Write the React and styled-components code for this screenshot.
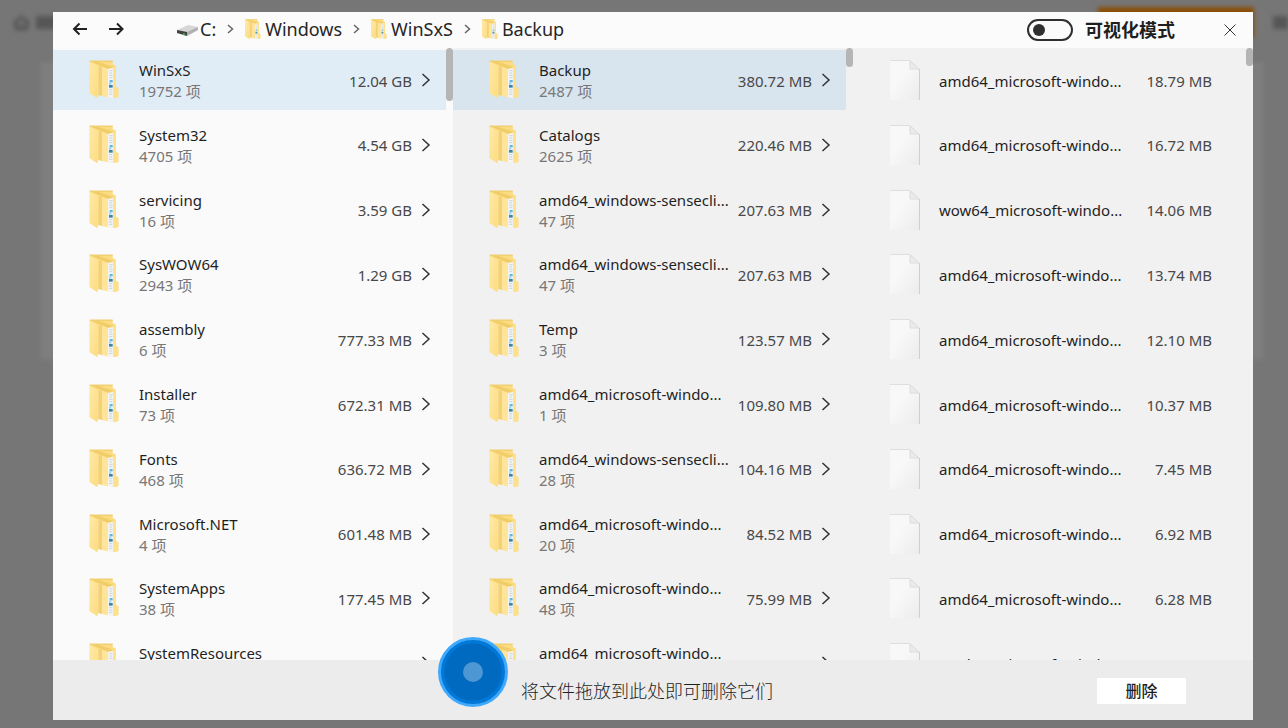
import React, { useState } from "react";
import styled, { createGlobalStyle } from "styled-components";

const GlobalStyle = createGlobalStyle`
  * {
    box-sizing: border-box;
  }
  body {
    margin: 0;
    background: #767676;
    color: #1f1f1f;
    font-family: "Noto Sans", "Noto Sans CJK SC", sans-serif;
    font-size: 15px;
  }
  button {
    border: 0;
    padding: 0;
    background: none;
    color: inherit;
    font: inherit;
    cursor: pointer;
  }
`;

const Page = styled.div`
  position: relative;
  height: 100vh;
  min-height: 400px;
  overflow: hidden;
`;

const Behind = styled.div`
  position: absolute;
  inset: 0;
  overflow: hidden;
  filter: blur(2px);
`;

const BehindBar = styled.div`
  display: flex;
  align-items: center;
  gap: 6px;
  height: 45px;
  padding-left: 13px;
`;

const Smudge = styled.div`
  width: ${(props) => props.$width}px;
  height: 13px;
  background: #4c4c4c;
  opacity: 0.75;
`;

const OrangeBlock = styled.div`
  width: 156px;
  height: 31px;
  margin-left: auto;
  margin-right: 13px;
  background: #8a4f08;
`;

const BehindPanel = styled.div`
  height: 298px;
  margin: 17px 24px 0 40px;
  background: #7e7e7e;
`;

const Overlay = styled.div`
  position: relative;
  display: flex;
  height: 100%;
  padding: 12px 35px 8px 53px;
`;

const Dialog = styled.section`
  display: flex;
  flex-direction: column;
  flex: 1;
  min-width: 0;
  background: #f1f1f1;
`;

const Header = styled.header`
  display: flex;
  align-items: center;
  flex: none;
  height: 36px;
  padding: 0 16px 0 19px;
  background: #fbfbfb;
`;

const NavButton = styled.button`
  display: flex;
  width: 18px;
  height: 20px;
  margin-right: 18px;
`;

const Breadcrumb = styled.nav`
  display: flex;
  align-items: center;
  flex: 1;
  min-width: 0;
  gap: 11px;
  margin-left: 33px;
  padding-bottom: 2px;
`;

const Crumb = styled.a`
  display: flex;
  align-items: center;
  gap: ${(props) => (props.$drive ? "1px" : "4px")};
  color: #262626;
  font-size: 18px;
  line-height: 24px;
  text-decoration: none;
  white-space: nowrap;
`;

const ModeSwitch = styled.label`
  display: flex;
  align-items: center;
  gap: 12px;
  margin-right: 48px;
  font-size: 18px;
  font-weight: 700;
  line-height: 24px;
  white-space: nowrap;
`;

const SwitchInput = styled.input`
  appearance: none;
  display: flex;
  align-items: center;
  width: 46px;
  height: 22px;
  margin: 0;
  padding: 0 4px;
  border: 2px solid #2f2f2f;
  border-radius: 11px;
  &::before {
    content: "";
    width: 12px;
    height: 12px;
    border-radius: 50%;
    background: #2f2f2f;
  }
  &:checked {
    justify-content: flex-end;
  }
`;

const CloseButton = styled.button`
  display: flex;
  width: 14px;
  height: 14px;
`;

const Columns = styled.main`
  display: grid;
  grid-template-columns: repeat(3, minmax(0, 1fr));
  flex: 1;
  min-height: 0;
`;

const Column = styled.div`
  display: flex;
  min-height: 0;
  overflow: hidden;
  background: ${(props) => (props.$light ? "#fafafa" : "#f1f1f1")};
`;

const List = styled.ul`
  display: grid;
  grid-template-rows: repeat(10, 1fr);
  flex: 1;
  min-width: 0;
  height: 650px;
  margin: 0;
  padding: 2px 0 0;
  list-style: none;
`;

const Thumb = styled.div`
  flex: none;
  width: 7px;
  height: ${(props) => props.$size}px;
  border-radius: 4px;
  background: #b5b5b5;
`;

const Row = styled.button`
  display: flex;
  align-items: center;
  width: 100%;
  height: 60px;
  padding: 0 15px 0 35px;
  background: ${(props) => props.$active || "transparent"};
  text-align: left;
  svg {
    flex: none;
  }
`;

const RowText = styled.span`
  flex: 1;
  min-width: 0;
  margin-left: 19px;
  padding-top: 2px;
  line-height: 21px;
  white-space: nowrap;
`;

const Name = styled.span`
  display: block;
`;

const Count = styled.span`
  display: block;
  color: #777;
`;

const Size = styled.span`
  padding-top: 2px;
  margin-right: 9px;
  color: #484848;
  line-height: 21px;
  white-space: nowrap;
`;

const ChevronSpace = styled.span`
  width: 10px;
`;

const Footer = styled.footer`
  position: relative;
  display: flex;
  align-items: center;
  justify-content: space-between;
  flex: none;
  height: 60px;
  padding: 2px 67px 0 calc(100% / 3 + 68px);
  background: #ececec;
`;

const DropHint = styled.span`
  font-size: 18px;
  font-weight: 300;
  line-height: 24px;
`;

const DropTarget = styled.div`
  position: absolute;
  top: -23px;
  left: calc(100% / 3 - 15px);
  display: flex;
  align-items: center;
  justify-content: center;
  width: 70px;
  height: 70px;
  border: 3px solid #40a9fc;
  border-radius: 50%;
  background: radial-gradient(circle, #0069c0 28px, #0078d7 29px);
  &::before {
    content: "";
    width: 20px;
    height: 20px;
    border-radius: 50%;
    background: #4d97d5;
  }
`;

const DeleteButton = styled.button`
  width: 89px;
  height: 26px;
  background: #fff;
  font-size: 16px;
  font-weight: 500;
  line-height: 24px;
`;

const FolderIcon = ({ small }) => (
  <svg
    width={small ? 16 : 32}
    height={small ? 21 : 40}
    viewBox={small ? "0 0 90 120" : "-4 0 96 120"}
    aria-hidden="true"
  >
    <defs>
      <linearGradient id="flap" x1="0" y1="0" x2="1" y2="1">
        <stop offset="0" stopColor="#ffe9a6" />
        <stop offset="1" stopColor="#fddc80" />
      </linearGradient>
    </defs>
    <path d="M1 2h69v11l9 3v64l8 4v27l-14 3L1 99z" fill="#fbdc80" />
    <path d="M1 2h69v3H1z" fill="#ecca6d" />
    <path d="M6 5h20l45 15-14 8z" fill="#f0cd68" />
    <path d="M55 27l17-3v91l-17-4z" fill="#f3f5f4" />
    <path d="M60 32h10M60 39h8M60 46h10M60 53h9M59 89h10M59 96h10M59 103h10" stroke="#ccd3d7" strokeWidth="3" />
    <path d="M61 60h9v7h-9z" fill="#62b7e6" />
    <path d="M59 67h7v7h-7z" fill="#a5d3ea" />
    <path d="M59 75h11v8H59z" fill="#3a86ad" />
    <path d="M73 20l6-3v95l-6 2z" fill="#ffe08c" />
    <path d="M22 17l20 5v87l-18-5z" fill="#f1d17a" />
    <path d="M38 20l18 6v86l-18-4z" fill="#ffe49a" />
    <path d="M1 5l27 14v80l-4 16L1 100z" fill="url(#flap)" />
    <path d="M78 82l9 3v26l-9 3z" fill="#fde08c" />
  </svg>
);

const FileIcon = () => (
  <svg width="32" height="42" viewBox="0 0 32 42" aria-hidden="true">
    <defs>
      <linearGradient id="paper" x1="0" y1="0" x2="1" y2="1">
        <stop offset="0.4" stopColor="#f8f8f8" />
        <stop offset="1" stopColor="#ececec" />
      </linearGradient>
    </defs>
    <path d="M2 1h20l9 9v31H2z" fill="url(#paper)" />
    <path d="M2 1.500h20l9 9" fill="none" stroke="#dedede" />
    <path d="M31.500 10v31" stroke="#cfcfcf" />
    <path d="M22 2v8h9z" fill="#ebebeb" stroke="#dcdcdc" />
  </svg>
);

const DriveIcon = () => (
  <svg width="22" height="14" viewBox="0 0 22 14" aria-hidden="true">
    <path d="M0 8l11-5 10 2-11 6z" fill="#d6d6d6" />
    <path d="M10 10l11-5v3l-11 6z" fill="#b0b0b0" />
    <path d="M0 8l10 2v4L0 11z" fill="#424242" />
    <path d="M6 11l2 .5v2L6 13z" fill="#36b14e" />
  </svg>
);

const Chevron = ({ small }) => (
  <svg
    width={small ? 7 : 10}
    height={small ? 10 : 16}
    viewBox={small ? "0 0 7 10" : "0 0 10 16"}
    fill="none"
    stroke={small ? "#666" : "#333"}
    strokeWidth="1.500"
    aria-hidden="true"
  >
    <path d={small ? "M1 1l4.500 4L1 9" : "M1.500 2l6.500 6-6.500 6"} />
  </svg>
);

const Arrow = ({ right }) => (
  <svg width="18" height="18" viewBox="0 0 18 18" fill="none" stroke="#222" strokeWidth="2" aria-hidden="true">
    <path d={right ? "M1 9h13M9 3.500L14.500 9 9 14.500" : "M15 9H2M7.500 3.500L2 9l5.500 5.500"} />
  </svg>
);

const windowsFolders = [
  ["WinSxS", 19752, "12.04 GB"],
  ["System32", 4705, "4.54 GB"],
  ["servicing", 16, "3.59 GB"],
  ["SysWOW64", 2943, "1.29 GB"],
  ["assembly", 6, "777.33 MB"],
  ["Installer", 73, "672.31 MB"],
  ["Fonts", 468, "636.72 MB"],
  ["Microsoft.NET", 4, "601.48 MB"],
  ["SystemApps", 38, "177.45 MB"],
  ["SystemResources", 81, "160.66 MB"],
];

const winSxsFolders = [
  ["Backup", 2487, "380.72 MB"],
  ["Catalogs", 2625, "220.46 MB"],
  ["amd64_windows-sensecli...", 47, "207.63 MB"],
  ["amd64_windows-sensecli...", 47, "207.63 MB"],
  ["Temp", 3, "123.57 MB"],
  ["amd64_microsoft-windo...", 1, "109.80 MB"],
  ["amd64_windows-sensecli...", 28, "104.16 MB"],
  ["amd64_microsoft-windo...", 20, "84.52 MB"],
  ["amd64_microsoft-windo...", 48, "75.99 MB"],
  ["amd64_microsoft-windo...", 12, "73.71 MB"],
];

const backupFiles = [
  ["amd64_microsoft-windo...", "18.79 MB"],
  ["amd64_microsoft-windo...", "16.72 MB"],
  ["wow64_microsoft-windo...", "14.06 MB"],
  ["amd64_microsoft-windo...", "13.74 MB"],
  ["amd64_microsoft-windo...", "12.10 MB"],
  ["amd64_microsoft-windo...", "10.37 MB"],
  ["amd64_microsoft-windo...", "7.45 MB"],
  ["amd64_microsoft-windo...", "6.92 MB"],
  ["amd64_microsoft-windo...", "6.28 MB"],
  ["amd64_microsoft-windo...", "5.67 MB"],
];

function FolderColumn({ folders, light, activeColor, thumb }) {
  return (
    <Column $light={light}>
      <List>
        {folders.map(([name, count, size], index) => (
          <li key={index}>
            <Row $active={index === 0 && activeColor}>
              <FolderIcon />
              <RowText>
                <Name>{name}</Name>
                <Count>{count} 项</Count>
              </RowText>
              <Size>{size}</Size>
              <Chevron />
            </Row>
          </li>
        ))}
      </List>
      <Thumb $size={thumb} />
    </Column>
  );
}

function App() {
  const [visual, setVisual] = useState(false);

  return (
    <Page>
      <GlobalStyle />
      <Behind aria-hidden="true">
        <BehindBar>
          <svg width="17" height="16" viewBox="0 0 17 16" fill="none" stroke="#484848" strokeWidth="2">
            <path d="M1 8l7.500-6L16 8M3 7v7h11V7M6 10h5" />
          </svg>
          <Smudge $width={22} />
          <OrangeBlock />
          <Smudge $width={15} />
        </BehindBar>
        <BehindPanel />
      </Behind>
      <Overlay>
        <Dialog role="dialog">
          <Header>
            <NavButton aria-label="后退">
              <Arrow />
            </NavButton>
            <NavButton aria-label="前进">
              <Arrow right />
            </NavButton>
            <Breadcrumb>
              <Crumb href="#c" $drive>
                <DriveIcon />
                C:
              </Crumb>
              {["Windows", "WinSxS", "Backup"].map((name) => (
                <React.Fragment key={name}>
                  <Chevron small />
                  <Crumb href={`#${name}`}>
                    <FolderIcon small />
                    {name}
                  </Crumb>
                </React.Fragment>
              ))}
            </Breadcrumb>
            <ModeSwitch>
              <SwitchInput
                type="checkbox"
                role="switch"
                checked={visual}
                onChange={(e) => setVisual(e.target.checked)}
              />
              可视化模式
            </ModeSwitch>
            <CloseButton aria-label="关闭">
              <svg width="14" height="14" viewBox="0 0 14 14" stroke="#333" fill="none">
                <path d="M1.500 1.500l11 11M12.500 1.500l-11 11" />
              </svg>
            </CloseButton>
          </Header>
          <Columns>
            <FolderColumn folders={windowsFolders} light activeColor="#e0edf7" thumb={53} />
            <FolderColumn folders={winSxsFolders} activeColor="#d9e5ee" thumb={19} />
            <Column>
              <List>
                {backupFiles.map(([name, size], index) => (
                  <li key={index}>
                    <Row>
                      <FileIcon />
                      <RowText>
                        <Name>{name}</Name>
                      </RowText>
                      <Size>{size}</Size>
                      <ChevronSpace />
                    </Row>
                  </li>
                ))}
              </List>
              <Thumb $size={18} />
            </Column>
          </Columns>
          <Footer>
            <DropTarget />
            <DropHint>将文件拖放到此处即可删除它们</DropHint>
            <DeleteButton>删除</DeleteButton>
          </Footer>
        </Dialog>
      </Overlay>
    </Page>
  );
}

export default App;
